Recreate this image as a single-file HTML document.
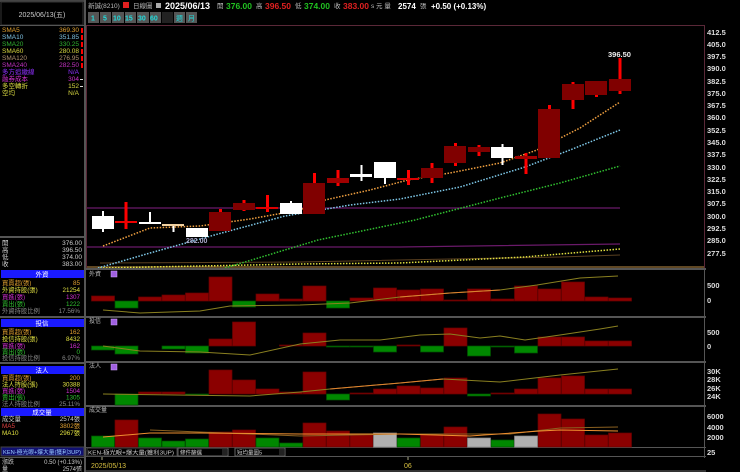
<!DOCTYPE html>
<html><head><meta charset="utf-8"><style>
html,body{margin:0;padding:0;background:#000;width:740px;height:472px;overflow:hidden}
svg{display:block}
text{font-family:"Liberation Sans","Noto Sans CJK TC",sans-serif}
</style></head><body>
<svg width="740" height="472" viewBox="0 0 740 472" xmlns="http://www.w3.org/2000/svg">
<rect width="740" height="472" fill="#000"/>
<rect x="0" y="0" width="85" height="2" fill="#444"/>
<rect x="84" y="0" width="2" height="472" fill="#555"/>
<rect x="1" y="2" width="82" height="23" fill="#000" stroke="#333"/>
<text x="42" y="17" font-size="7" fill="#ccc" text-anchor="middle">2025/06/13(五)</text>
<rect x="0" y="25" width="84" height="1" fill="#555"/>
<g font-size="6.5">
<text x="2" y="32" fill="#e0a030">SMA5</text><text x="79" y="32" fill="#e0a030" text-anchor="end">369.30</text>
<text x="2" y="39" fill="#7ec0e0">SMA10</text><text x="79" y="39" fill="#7ec0e0" text-anchor="end">351.85</text>
<text x="2" y="46" fill="#30b030">SMA20</text><text x="79" y="46" fill="#30b030" text-anchor="end">330.25</text>
<text x="2" y="53" fill="#d8d840">SMA60</text><text x="79" y="53" fill="#d8d840" text-anchor="end">280.08</text>
<text x="2" y="60" fill="#b09070">SMA120</text><text x="79" y="60" fill="#b09070" text-anchor="end">276.95</text>
<text x="2" y="67" fill="#c030c0">SMA240</text><text x="79" y="67" fill="#c030c0" text-anchor="end">282.50</text>
<text x="2" y="74" fill="#9030ff">多方追繳線</text><text x="79" y="74" fill="#9030ff" text-anchor="end">N/A</text>
<text x="2" y="81" fill="#d030d0">融券成本</text><text x="79" y="81" fill="#d030d0" text-anchor="end">304</text>
<text x="2" y="88" fill="#d8d840">多空轉折</text><text x="79" y="88" fill="#d8d840" text-anchor="end">152</text>
<text x="2" y="95" fill="#d8d840">空均</text><text x="79" y="95" fill="#d8d840" text-anchor="end">N/A</text>
</g>
<g fill="#f00"><rect x="81" y="28" width="2" height="5"/><rect x="81" y="35" width="2" height="5"/><rect x="81" y="42" width="2" height="5"/><rect x="81" y="49" width="2" height="5"/><rect x="81" y="56" width="2" height="5"/><rect x="81" y="63" width="2" height="5"/></g>
<g fill="#ddd"><rect x="80" y="79" width="3" height="1"/><rect x="80" y="86" width="3" height="1"/></g>
<rect x="0" y="236" width="84" height="2" fill="#555"/>
<g font-size="6.5" fill="#ccc">
<text x="2" y="245">開</text><text x="82" y="245" text-anchor="end">376.00</text>
<text x="2" y="252">高</text><text x="82" y="252" text-anchor="end">396.50</text>
<text x="2" y="259">低</text><text x="82" y="259" text-anchor="end">374.00</text>
<text x="2" y="266">收</text><text x="82" y="266" text-anchor="end">383.00</text>
</g>
<rect x="1" y="270" width="83" height="8" fill="#1a1aff"/><text x="42" y="276.5" font-size="6.5" fill="#fff" text-anchor="middle">外資</text>
<g font-size="6.3">
<text x="2" y="285" fill="#e0a030">買賣超(張)</text><text x="80" y="285" fill="#e0a030" text-anchor="end">85</text>
<text x="2" y="292" fill="#e0e040">外資持股(張)</text><text x="80" y="292" fill="#e0e040" text-anchor="end">21254</text>
<text x="2" y="299" fill="#d030d0">買進(張)</text><text x="80" y="299" fill="#d030d0" text-anchor="end">1307</text>
<text x="2" y="306" fill="#30c030">賣出(張)</text><text x="80" y="306" fill="#30c030" text-anchor="end">1222</text>
<text x="2" y="313" fill="#888">外資持股比例</text><text x="80" y="313" fill="#888" text-anchor="end">17.56%</text>
</g>
<rect x="0" y="316" width="84" height="2" fill="#555"/>
<rect x="1" y="319" width="83" height="8" fill="#1a1aff"/><text x="42" y="325.5" font-size="6.5" fill="#fff" text-anchor="middle">投信</text>
<g font-size="6.3">
<text x="2" y="334" fill="#e0a030">買賣超(張)</text><text x="80" y="334" fill="#e0a030" text-anchor="end">162</text>
<text x="2" y="341" fill="#e0e040">投信持股(張)</text><text x="80" y="341" fill="#e0e040" text-anchor="end">8432</text>
<text x="2" y="348" fill="#d030d0">買進(張)</text><text x="80" y="348" fill="#d030d0" text-anchor="end">162</text>
<text x="2" y="354" fill="#30c030">賣出(張)</text><text x="80" y="354" fill="#30c030" text-anchor="end">0</text>
<text x="2" y="360" fill="#888">投信持股比例</text><text x="80" y="360" fill="#888" text-anchor="end">6.97%</text>
</g>
<rect x="0" y="362" width="84" height="2" fill="#555"/>
<rect x="1" y="366" width="83" height="8" fill="#1a1aff"/><text x="42" y="372.5" font-size="6.5" fill="#fff" text-anchor="middle">法人</text>
<g font-size="6.3">
<text x="2" y="380" fill="#e0a030">買賣超(張)</text><text x="80" y="380" fill="#e0a030" text-anchor="end">200</text>
<text x="2" y="386.5" fill="#e0e040">法人持股(張)</text><text x="80" y="386.5" fill="#e0e040" text-anchor="end">30388</text>
<text x="2" y="393" fill="#d030d0">買進(張)</text><text x="80" y="393" fill="#d030d0" text-anchor="end">1504</text>
<text x="2" y="399.5" fill="#30c030">賣出(張)</text><text x="80" y="399.5" fill="#30c030" text-anchor="end">1305</text>
<text x="2" y="406" fill="#888">法人持股比例</text><text x="80" y="406" fill="#888" text-anchor="end">25.11%</text>
</g>
<rect x="1" y="408" width="83" height="8" fill="#1a1aff"/><text x="42" y="414.5" font-size="6.5" fill="#fff" text-anchor="middle">成交量</text>
<g font-size="6.3">
<text x="2" y="421" fill="#ccc">成交量</text><text x="80" y="421" fill="#ccc" text-anchor="end">2574張</text>
<text x="2" y="428" fill="#e04040">MA5</text><text x="80" y="428" fill="#e0a030" text-anchor="end">3802張</text>
<text x="2" y="435" fill="#e0e040">MA10</text><text x="80" y="435" fill="#e0e040" text-anchor="end">2967張</text>
</g>
<rect x="1" y="447" width="83" height="9" fill="#101070" stroke="#444"/>
<text x="3" y="454" font-size="5.5" fill="#9cf" textLength="78" lengthAdjust="spacingAndGlyphs">KEN-極光眼+爆大量(獲利3UP)</text>
<rect x="0" y="457" width="84" height="1" fill="#555"/>
<text x="2" y="464" font-size="6" fill="#ccc">漲跌</text><text x="82" y="464" font-size="6" fill="#ccc" text-anchor="end">0.50 (+0.13%)</text>
<text x="2" y="471" font-size="6" fill="#ccc">量</text><text x="82" y="471" font-size="6" fill="#ccc" text-anchor="end">2574張</text>

<text x="88" y="8" font-size="6.5" fill="#bbb">新誠(8210)</text>
<rect x="123" y="2" width="6" height="6" fill="#e02020"/>
<text x="133" y="8" font-size="6.5" fill="#bbb">日線圖</text>
<rect x="156" y="3" width="5" height="5" fill="#aaa"/>
<text x="165" y="9" font-size="9" font-weight="bold" fill="#fff">2025/06/13</text>
<text x="217" y="8" font-size="6.5" fill="#bbb">開</text><text x="226" y="9" font-size="8.5" font-weight="bold" fill="#20c020">376.00</text>
<text x="256" y="8" font-size="6.5" fill="#bbb">高</text><text x="265" y="9" font-size="8.5" font-weight="bold" fill="#e02020">396.50</text>
<text x="295" y="8" font-size="6.5" fill="#bbb">低</text><text x="304" y="9" font-size="8.5" font-weight="bold" fill="#20c020">374.00</text>
<text x="334" y="8" font-size="6.5" fill="#bbb">收</text><text x="343" y="9" font-size="8.5" font-weight="bold" fill="#e02020">383.00</text>
<text x="371" y="8" font-size="6.5" fill="#bbb">s 元  量</text>
<text x="398" y="9" font-size="8" font-weight="bold" fill="#fff">2574</text>
<text x="420" y="8" font-size="6.5" fill="#bbb">張</text>
<text x="431" y="9" font-size="8" font-weight="bold" fill="#fff">+0.50 (+0.13%)</text>
<g font-size="7" font-weight="bold" fill="#2dd">
<rect x="88" y="12" width="11" height="11" fill="#555"/><text x="91" y="20.5">1</text>
<rect x="100" y="12" width="11" height="11" fill="#555"/><text x="103" y="20.5">5</text>
<rect x="112" y="12" width="12" height="11" fill="#555"/><text x="113" y="20.5">10</text>
<rect x="125" y="12" width="11" height="11" fill="#555"/><text x="125" y="20.5">15</text>
<rect x="137" y="12" width="12" height="11" fill="#555"/><text x="138" y="20.5">30</text>
<rect x="150" y="12" width="11" height="11" fill="#555"/><text x="150" y="20.5">60</text>
<rect x="162" y="12" width="11" height="11" fill="#222"/>
<rect x="174" y="12" width="11" height="11" fill="#555"/><text x="176" y="20.5" font-weight="normal">週</text>
<rect x="186" y="12" width="11" height="11" fill="#555"/><text x="188" y="20.5" font-weight="normal">月</text>
</g>

<rect x="86.5" y="25.5" width="618" height="243" fill="none" stroke="#5a2838"/>
<g font-size="7.5" fill="#ddd" font-weight="bold">
<text x="707" y="35">412.5</text><text x="707" y="47">405.0</text><text x="707" y="59">397.5</text><text x="707" y="71">390.0</text><text x="707" y="84">382.5</text><text x="707" y="96">375.0</text><text x="707" y="108">367.5</text><text x="707" y="120">360.0</text><text x="707" y="133">352.5</text><text x="707" y="145">345.0</text><text x="707" y="157">337.5</text><text x="707" y="170">330.0</text><text x="707" y="182">322.5</text><text x="707" y="194">315.0</text><text x="707" y="206">307.5</text><text x="707" y="219">300.0</text><text x="707" y="231">292.5</text><text x="707" y="243">285.0</text><text x="707" y="256">277.5</text>
</g>
<line x1="87" y1="208" x2="620" y2="208" stroke="#6a1a6a" stroke-width="1.2"/>
<polyline points="87,247 400,247 620,244" fill="none" stroke="#6a1a6a" stroke-width="1.2"/>
<polyline points="100,263 300,262 450,259 560,257 620,255" fill="none" stroke="#5a4020" stroke-width="1"/>
<line x1="87" y1="267" x2="704" y2="267" stroke="#806030" stroke-width="1.5"/>
<polyline points="100,268 200,266 300,264 400,263 525,257 620,249" fill="none" stroke="#e0e040" stroke-width="1.5" stroke-dasharray="1.5,1.5"/>
<polyline points="225,268 318,240 415,220 500,198 560,183 620,166" fill="none" stroke="#30c030" stroke-width="1.5" stroke-dasharray="1.5,1.5"/>
<polyline points="98,268 150,253 218,234 285,216 350,205 400,199 460,187 525,167 570,150 620,130" fill="none" stroke="#7ec8e8" stroke-width="1.5" stroke-dasharray="1.5,1.5"/>
<polyline points="103,246 150,228 200,226 250,219 300,210 325,200 370,190 408,180 450,173 500,163 537,150 580,128 620,102" fill="none" stroke="#f0a040" stroke-width="1.5" stroke-dasharray="1.5,1.5"/>
<g>
<rect x="102" y="211" width="2" height="21" fill="#fff"/><rect x="92" y="216" width="22" height="13" fill="#fff"/>
<rect x="124.5" y="202" width="3" height="27" fill="#f00"/><rect x="115" y="221" width="22" height="2" fill="#e00"/>
<rect x="149" y="212" width="2" height="12" fill="#fff"/><rect x="139" y="222" width="22" height="2" fill="#fff"/>
<rect x="172.5" y="224" width="2" height="8" fill="#fff"/><rect x="162" y="224" width="22" height="2" fill="#f0d0a0"/>
<rect x="186" y="228" width="22" height="9" fill="#fff"/>
<rect x="219" y="209" width="3" height="22" fill="#f00"/><rect x="209" y="212" width="22" height="19" fill="#800000"/>
<rect x="242.5" y="200" width="3" height="11" fill="#f00"/><rect x="233" y="203" width="22" height="7" fill="#800000"/>
<rect x="266" y="195" width="3" height="17" fill="#f00"/><rect x="256" y="207" width="22" height="2" fill="#d00"/>
<rect x="290" y="201" width="2" height="13" fill="#fff"/><rect x="280" y="203" width="22" height="11" fill="#fff"/>
<rect x="313" y="173" width="3" height="41" fill="#f00"/><rect x="303" y="183" width="22" height="31" fill="#800000"/>
<rect x="336.5" y="170" width="3" height="16" fill="#f00"/><rect x="327" y="178" width="22" height="5" fill="#a00000"/>
<rect x="360.5" y="165" width="2" height="16" fill="#fff"/><rect x="350" y="174" width="22" height="3" fill="#fff"/>
<rect x="384" y="162" width="2" height="22" fill="#fff"/><rect x="374" y="162" width="22" height="16" fill="#fff"/>
<rect x="407" y="170" width="3" height="15" fill="#f00"/><rect x="397" y="178" width="22" height="2" fill="#d00"/>
<rect x="430.5" y="163" width="3" height="20" fill="#f00"/><rect x="421" y="168" width="22" height="10" fill="#800000"/>
<rect x="454" y="143" width="3" height="23" fill="#f00"/><rect x="444" y="146" width="22" height="17" fill="#800000"/>
<rect x="477.5" y="145" width="3" height="11" fill="#f00"/><rect x="468" y="147" width="22" height="5" fill="#800000"/>
<rect x="501.5" y="144" width="2" height="21" fill="#fff"/><rect x="491" y="147" width="22" height="11" fill="#fff"/>
<rect x="524.5" y="153" width="3" height="21" fill="#f00"/><rect x="515" y="156" width="22" height="3" fill="#a00000"/>
<rect x="548" y="105" width="3" height="53" fill="#f00"/><rect x="538" y="109" width="22" height="49" fill="#800000"/>
<rect x="571.5" y="82" width="3" height="27" fill="#f00"/><rect x="562" y="84" width="22" height="16" fill="#800000"/>
<rect x="595" y="81" width="3" height="16" fill="#f00"/><rect x="585" y="81" width="22" height="14" fill="#800000"/>
<rect x="618.5" y="58" width="3" height="36" fill="#f00"/><rect x="609" y="79" width="22" height="12" fill="#800000"/>
</g>
<text x="608" y="57" font-size="7.5" fill="#eee" font-weight="bold">396.50</text>
<text x="186" y="243" font-size="7" fill="#aac" font-weight="bold">282.00</text>

<g fill="#555">
<rect x="86" y="268" width="620" height="2"/>
<rect x="86" y="316" width="620" height="2"/>
<rect x="86" y="361" width="620" height="2"/>
<rect x="86" y="405" width="620" height="2"/>
<rect x="86" y="447" width="620" height="1"/>
<rect x="86" y="456" width="620" height="1"/>
<rect x="704" y="268" width="1" height="190"/>
</g>
<g font-size="6" fill="#bbb">
<text x="89" y="276">外資</text><text x="89" y="323">投信</text><text x="89" y="368">法人</text><text x="89" y="412">成交量</text>
</g>
<g fill="#a060e0" stroke="#d0a0ff" stroke-width="0.5"><rect x="111" y="271" width="6" height="6"/><rect x="111" y="319" width="6" height="6"/><rect x="111" y="364" width="6" height="6"/></g>
<g font-size="7.5" fill="#ddd" font-weight="bold">
<text x="707" y="288">500</text><text x="707" y="303">0</text>
<text x="707" y="335">500</text><text x="707" y="349">0</text>
<text x="707" y="374">30K</text><text x="707" y="382">28K</text><text x="707" y="391">26K</text><text x="707" y="399">24K</text>
<text x="707" y="419">6000</text><text x="707" y="430">4000</text><text x="707" y="440">2000</text>
<text x="707" y="455">25</text>
</g>
<g stroke-width="0.7">
<g fill="#8b0000" stroke="#600">
<rect x="91.5" y="296" width="23" height="5"/><rect x="138.5" y="297" width="23" height="4"/><rect x="162" y="295" width="23" height="6"/><rect x="185.5" y="293" width="23" height="8"/><rect x="209" y="277" width="23" height="24"/><rect x="256" y="294" width="23" height="7"/><rect x="279.5" y="299" width="23" height="2"/><rect x="303" y="286" width="23" height="15"/><rect x="350" y="298" width="23" height="3"/><rect x="373.5" y="288" width="23" height="13"/><rect x="397" y="290" width="23" height="11"/><rect x="420.5" y="289" width="23" height="12"/><rect x="444" y="300" width="23" height="1"/><rect x="467.5" y="289" width="23" height="12"/><rect x="491" y="299" width="23" height="2"/><rect x="514.5" y="286" width="23" height="15"/><rect x="538" y="289" width="23" height="12"/><rect x="561.5" y="282" width="23" height="19"/><rect x="585" y="297" width="23" height="4"/><rect x="608.5" y="298" width="23" height="3"/>
</g>
<g fill="#008800" stroke="#005000">
<rect x="115" y="301" width="23" height="7"/><rect x="232.5" y="301" width="23" height="6"/><rect x="326.5" y="301" width="23" height="7"/>
</g>
</g>
<polyline points="103,310 140,313 200,311 230,306 300,305 350,303 400,297 450,293 500,290 537,285 580,278 618,276" fill="none" stroke="#8a8020" stroke-width="1"/>
<polyline points="400,297 450,293 500,290" fill="none" stroke="#e08030" stroke-width="1"/>
<g stroke-width="0.7">
<g fill="#8b0000" stroke="#600">
<rect x="209" y="339" width="23" height="7"/><rect x="232.5" y="322" width="23" height="24"/><rect x="279.5" y="345" width="23" height="1"/><rect x="303" y="333" width="23" height="13"/><rect x="397" y="345" width="23" height="1"/><rect x="444" y="328" width="23" height="18"/><rect x="538" y="337" width="23" height="9"/><rect x="561.5" y="337" width="23" height="9"/><rect x="585" y="341" width="23" height="5"/><rect x="608.5" y="341" width="23" height="5"/>
</g>
<g fill="#008800" stroke="#005000">
<rect x="91.5" y="346" width="23" height="4"/><rect x="115" y="346" width="23" height="8"/><rect x="162" y="346" width="23" height="3"/><rect x="185.5" y="346" width="23" height="7"/><rect x="326.5" y="346" width="23" height="1"/><rect x="350" y="346" width="23" height="1"/><rect x="373.5" y="346" width="23" height="6"/><rect x="420.5" y="346" width="23" height="6"/><rect x="467.5" y="346" width="23" height="10"/><rect x="491" y="346" width="23" height="1"/><rect x="514.5" y="346" width="23" height="7"/>
</g>
</g>
<polyline points="103,346 140,351 200,352 250,355 300,344 340,340 380,340 420,335 450,334 480,338 500,336 525,340 560,335 600,329 618,326" fill="none" stroke="#8a8020" stroke-width="1"/>
<g stroke-width="0.7">
<g fill="#8b0000" stroke="#600">
<rect x="138.5" y="392" width="23" height="2"/><rect x="162" y="392" width="23" height="2"/><rect x="209" y="370" width="23" height="24"/><rect x="232.5" y="380" width="23" height="14"/><rect x="256" y="389" width="23" height="5"/><rect x="279.5" y="392" width="23" height="2"/><rect x="303" y="372" width="23" height="22"/><rect x="350" y="393" width="23" height="1"/><rect x="373.5" y="389" width="23" height="5"/><rect x="397" y="386" width="23" height="8"/><rect x="420.5" y="388" width="23" height="6"/><rect x="444" y="378" width="23" height="16"/><rect x="491" y="393" width="23" height="1"/><rect x="514.5" y="389" width="23" height="5"/><rect x="538" y="378" width="23" height="16"/><rect x="561.5" y="376" width="23" height="18"/><rect x="585" y="389" width="23" height="5"/><rect x="608.5" y="389" width="23" height="5"/>
</g>
<g fill="#008800" stroke="#005000">
<rect x="115" y="394" width="23" height="11"/><rect x="185.5" y="394" width="23" height="1"/><rect x="326.5" y="394" width="23" height="6"/><rect x="467.5" y="394" width="23" height="2"/>
</g>
</g>
<polyline points="103,394 250,396 300,392 330,389 400,383 443,379 500,382 560,375 618,369" fill="none" stroke="#8a8020" stroke-width="1"/>
<polyline points="330,389 400,383 443,379" fill="none" stroke="#e08030" stroke-width="1"/>
<g stroke-width="0.7">
<g fill="#8b0000" stroke="#600">
<rect x="115" y="420" width="23" height="27"/><rect x="209" y="432" width="23" height="15"/><rect x="232.5" y="430" width="23" height="17"/><rect x="303" y="423" width="23" height="24"/><rect x="326.5" y="431" width="23" height="16"/><rect x="350" y="434" width="23" height="13"/><rect x="420.5" y="434" width="23" height="13"/><rect x="444" y="427" width="23" height="20"/><rect x="538" y="414" width="23" height="33"/><rect x="561.5" y="419" width="23" height="28"/><rect x="585" y="435" width="23" height="12"/><rect x="608.5" y="433" width="23" height="14"/>
</g>
<g fill="#008800" stroke="#005000">
<rect x="91.5" y="436" width="23" height="11"/><rect x="138.5" y="438" width="23" height="9"/><rect x="162" y="441" width="23" height="6"/><rect x="185.5" y="439" width="23" height="8"/><rect x="256" y="438" width="23" height="9"/><rect x="279.5" y="443" width="23" height="4"/><rect x="397" y="438" width="23" height="9"/><rect x="491" y="440" width="23" height="7"/>
</g>
<g fill="#b0b0b0" stroke="#888">
<rect x="373.5" y="433" width="23" height="14"/><rect x="467.5" y="438" width="23" height="9"/><rect x="514.5" y="436" width="23" height="11"/>
</g>
</g>
<polyline points="150,430 200,432 300,436 400,434 510,434 560,428 618,427" fill="none" stroke="#8a6020" stroke-width="1"/>
<polyline points="103,437 150,433 200,433 300,434 400,434 470,436 540,431 560,430 618,431" fill="none" stroke="#f09030" stroke-width="1"/>
<rect x="87" y="448" width="90" height="8" fill="#000" stroke="#444"/>
<text x="88" y="454.5" font-size="5.5" fill="#ccc" textLength="86" lengthAdjust="spacingAndGlyphs">KEN-極光眼+爆大量(獲利3UP)</text>
<rect x="178" y="448" width="50" height="8" fill="#000" stroke="#666"/><text x="180" y="454.5" font-size="5.5" fill="#ccc">條件篩選</text><rect x="222" y="449" width="5" height="6" fill="#222"/>
<rect x="235" y="448" width="50" height="8" fill="#000" stroke="#666"/><text x="237" y="454.5" font-size="5.5" fill="#ccc">短均量圖5</text><rect x="279" y="449" width="5" height="6" fill="#222"/>
<line x1="102" y1="457" x2="102" y2="460" stroke="#aa8"/>
<text x="91" y="468" font-size="7" fill="#d8c040">2025/05/13</text>
<line x1="408" y1="457" x2="408" y2="460" stroke="#aa8"/>
<text x="404" y="468" font-size="7" fill="#d8c040">06</text>
<rect x="86" y="470" width="620" height="2" fill="#333"/>
</svg>
</body></html>
